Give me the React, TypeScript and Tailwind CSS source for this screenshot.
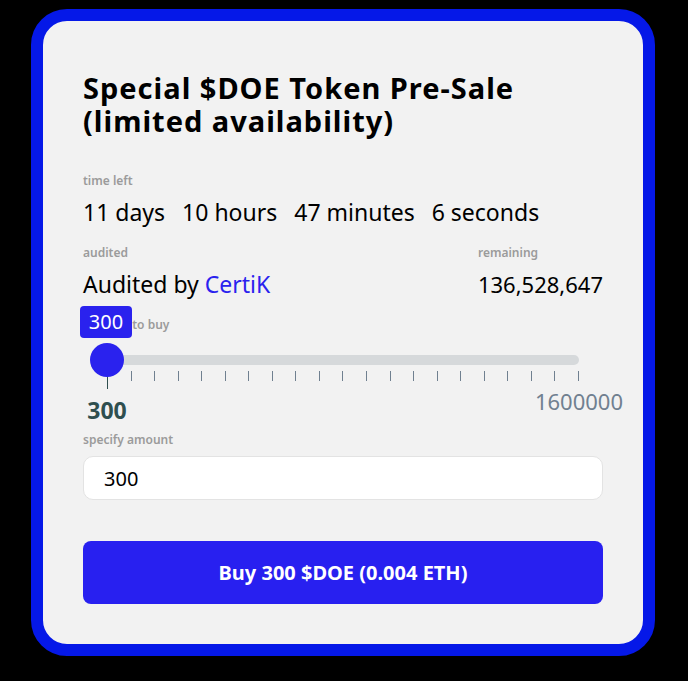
import { useState } from "react";

const TICKS = Array.from({ length: 21 }, (_, i) => i);

export default function App() {
  const [amount, setAmount] = useState("300");

  return (
    <div className="min-h-screen bg-black pl-[31px] pt-[9px] pb-6" style={{ fontFamily: '"Noto Sans", sans-serif' }}>
      <div className="w-[624px] rounded-[36px] border-[12px] border-[#0518e8] bg-[#f2f2f2] px-10 pt-[50px] pb-10">
        <h1 className="text-[29px] font-bold leading-[33px] tracking-[1px] text-black">
          Special $DOE Token Pre-Sale
          <br />
          (limited availability)
        </h1>

        <div className="mt-[36px] text-[12px] font-semibold leading-4 text-[#9b9b9b]">time left</div>
        <div className="mt-2 flex gap-[17px] text-[23px] leading-[30px] text-black">
          <span>11 days</span>
          <span>10 hours</span>
          <span>47 minutes</span>
          <span>6 seconds</span>
        </div>

        <div className="mt-[18px] flex justify-between">
          <div>
            <div className="text-[12px] font-semibold leading-4 text-[#9b9b9b]">audited</div>
            <div className="mt-2 text-[23px] leading-[30px] text-black">
              Audited by <span className="text-[#2a22ee]">CertiK</span>
            </div>
          </div>
          <div>
            <div className="text-[12px] font-semibold leading-4 text-[#9b9b9b]">remaining</div>
            <div className="mt-2 text-[22px] leading-[30px] text-black">136,528,647</div>
          </div>
        </div>

        <div className="mt-[18px] text-[12px] font-semibold leading-4 text-[#9b9b9b]">amount to buy</div>

        {/* slider */}
        <div className="relative ml-6 w-[472px] pt-[22px]">
          <div className="h-[10px] rounded-r-full bg-[#d6d9db]" />
          <div className="mt-[6px] flex h-[10px] justify-between">
            {TICKS.map((i) => (
              <div
                key={i}
                className={i === 0 ? "h-[18px] w-px bg-[#2f4f4f]" : "h-[10px] w-px bg-[#708090]"}
              />
            ))}
          </div>
          <div className="h-[51px]" />
          <div className="absolute left-[-17px] top-[10px] h-[34px] w-[34px] rounded-full bg-[#2a22ee]" />
          <div className="absolute left-[-27px] top-[-27px] flex h-[32px] w-[52px] items-center justify-center rounded-[4px] bg-[#2a22ee] text-[20px] text-white">
            300
          </div>
          <div className="absolute left-[-30px] top-[65px] w-[60px] text-center text-[23px] font-bold leading-6 text-[#2f4f4f]">
            300
          </div>
          <div className="absolute left-[422px] top-[56px] w-[100px] text-center text-[22px] leading-6 text-[#708090]">
            1600000
          </div>
        </div>

        <div className="text-[12px] font-semibold leading-4 text-[#9b9b9b]">specify amount</div>
        <input
          value={amount}
          onChange={(e) => setAmount(e.target.value)}
          className="mt-2 h-[44px] w-full rounded-[10px] border border-[#e3e3e3] bg-white px-5 text-[20px] text-black outline-none"
        />

        <button className="mt-[41px] h-[63px] w-full rounded-lg bg-[#2820f0] text-[20px] font-bold text-white">
          Buy 300 $DOE (0.004 ETH)
        </button>
      </div>
    </div>
  );
}
